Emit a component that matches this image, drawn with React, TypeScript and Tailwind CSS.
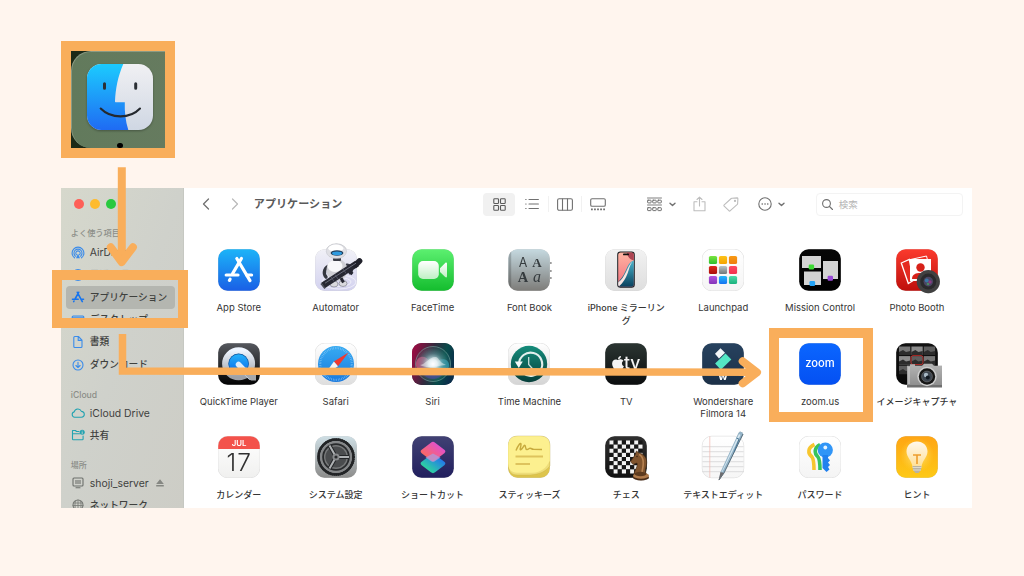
import type { ReactNode } from "react";
import clsx from "clsx";
import { FaApple } from "react-icons/fa";

/* ---------- helpers ---------- */

function Grad({ id, from, to, x2 = 0, y2 = 1 }: { id: string; from: string; to: string; x2?: number; y2?: number }) {
  return (
    <linearGradient id={id} x1="0" y1="0" x2={x2} y2={y2}>
      <stop offset="0" stopColor={from} />
      <stop offset="1" stopColor={to} />
    </linearGradient>
  );
}

function Tile({ id, from, to, children, edge }: { id: string; from: string; to: string; children?: ReactNode; edge?: boolean }) {
  return (
    <svg viewBox="0 0 42 42" className="h-[42px] w-[42px] shrink-0 overflow-visible drop-shadow-[0_0.5px_0.5px_rgba(0,0,0,0.25)]">
      <defs>
        <Grad id={id} from={from} to={to} />
      </defs>
      <rect x="0.2" y="0.2" width="41.6" height="41.6" rx="9.5" fill={`url(#${id})`} stroke={edge ? "#ececec" : "none"} strokeWidth="0.3" />
      {children}
    </svg>
  );
}

/* ---------- app icons ---------- */

const AppStore = () => (
  <Tile id="as" from="#1cb4f8" to="#1a5fe6">
    <g stroke="#fff" strokeWidth="3.2" strokeLinecap="round">
      <path d="M23.4 9.5 14.6 24.6M12.1 30.2 11.4 31.4" />
      <path d="M18.8 9.5 32 31.6" />
      <path d="M8.2 26H20M28.6 26H33.6" />
    </g>
  </Tile>
);

const Automator = () => (
  <Tile id="au" from="#f1f1f7" to="#d3d2ef">
    <g fill="none" stroke="#fff" strokeWidth="0.8" opacity="0.7">
      <ellipse cx="24" cy="33" rx="17" ry="7" />
      <ellipse cx="24" cy="33" rx="12" ry="4.5" />
    </g>
    <path d="M16 17C9 17 8 25 11 28" fill="none" stroke="#34363f" strokeWidth="3.4" strokeLinecap="round" />
    <path d="M32 16c5 1 6 5 3 8" fill="none" stroke="#3c3e49" strokeWidth="3" strokeLinecap="round" />
    <ellipse cx="19" cy="35" rx="4" ry="3" fill="#d9d9de" stroke="#70727d" strokeWidth="0.6" />
    <ellipse cx="28" cy="34.5" rx="4" ry="3" fill="#d9d9de" stroke="#70727d" strokeWidth="0.6" />
    <ellipse cx="22" cy="21" rx="10.5" ry="11" fill="#cfcfd5" />
    <ellipse cx="20" cy="17" rx="7.5" ry="6" fill="#f8f8fa" />
    <rect x="18" y="8.5" width="8" height="3.5" rx="1" fill="#3b3d46" />
    <ellipse cx="21.4" cy="2.2" rx="10.2" ry="7.4" fill="#dfdfe4" stroke="#b7b8c0" strokeWidth="0.4" />
    <ellipse cx="20.8" cy="-0.8" rx="7.5" ry="3.6" fill="#fff" />
    <ellipse cx="22" cy="4" rx="6.4" ry="2.8" fill="#24405c" />
    <ellipse cx="22" cy="4.3" rx="5" ry="1.9" fill="#2e9be0" />
    <path d="m8 36.5 34-22" stroke="#272833" strokeWidth="6.4" />
    <path d="m40.5 16 4-4" stroke="#20212b" strokeWidth="5.6" strokeLinecap="round" />
    <path d="m10 34.2 31-20" stroke="#6b6d7c" strokeWidth="1" />
    <path d="m26 29 2.5 4.5M34 22l3.5 3" stroke="#272833" strokeWidth="3" />
    <path d="M6 34.5 10 39.5" stroke="#4b4d58" strokeWidth="1.6" />
    <path d="m16 28 3 4.4M20 25.6l3 4.4M28 20l3 4.4" stroke="#555768" strokeWidth="0.9" />
  </Tile>
);

const FaceTime = () => (
  <Tile id="ft" from="#5cf070" to="#14bd2e">
    <defs>
      <Grad id="ftc" from="#ffffff" to="#bff0c4" />
    </defs>
    <rect x="6.2" y="12" width="20.6" height="18" rx="4.8" fill="url(#ftc)" />
    <path d="M28 19.2 33.2 14c.8-.8 1.8-.5 1.8.6v12.8c0 1.1-1 1.4-1.8.6L28 22.9Z" fill="url(#ftc)" />
  </Tile>
);

const FontBook = () => (
  <Tile id="fb" from="#c5d9e0" to="#7d7c79">
    <path d="M42 14h1.6M42 22h1.6M42 29h1.6" stroke="#8c8c8c" strokeWidth="1.6" />
    <path d="M3.2 2.5C1.5 4 .8 6 .8 9.5v23c0 3 .7 5 2.4 6.5Z" fill="#00000030" />
    <g fill="#353b3e" textAnchor="middle">
      <text x="15" y="17.5" fontSize="12.5" className="font-['Inter',sans-serif] font-normal">A</text>
      <text x="29" y="17.5" fontSize="13" className="font-['Liberation_Serif',serif] font-bold">A</text>
      <text x="15" y="32.5" fontSize="14.5" className="font-['Liberation_Serif',serif] font-bold">A</text>
      <text x="29" y="32.5" fontSize="16" className="font-['Liberation_Serif',serif] italic">a</text>
    </g>
  </Tile>
);

const Mirroring = () => (
  <Tile id="im" from="#f2f2f2" to="#dedede">
    <defs>
      <Grad id="imr" from="#ffb6a3" to="#f06c7c" />
      <Grad id="imb" from="#4ab7cf" to="#063c59" />
      <clipPath id="imc">
        <rect x="13.2" y="3.6" width="15.6" height="34.2" rx="2.5" />
      </clipPath>
    </defs>
    <rect x="12.2" y="2.6" width="17.6" height="36.2" rx="3.2" fill="#1c1e22" />
    <g clipPath="url(#imc)">
      <path d="M12 3h18v36H12Z" fill="url(#imr)" />
      <path d="M30 11C20 14 23 25 12 34v5h18Z" fill="url(#imb)" />
      <path d="M12 34c9-5 9-16 16-22-6 7-3 17-16 27Z" fill="#f8e5e2" />
      <path d="M22 3h8v8c-4 1-8-3-8-8Z" fill="#ad4553" />
    </g>
    <rect x="18" y="4.6" width="6" height="1.7" rx="0.85" fill="#111" />
  </Tile>
);

const launchColors = [
  ["#7be43f", "#2abf2d"], ["#fcc319", "#f5a200"], ["#f89a12", "#ed7d10"],
  ["#e12b1d", "#a80d0a"], ["#bac4c8", "#707779"], ["#ff4964", "#f2304d"],
  ["#b353df", "#8335b8"], ["#25b9fb", "#1672f0"], ["#4fd9a9", "#18b17c"],
];

const Launchpad = () => (
  <Tile id="lp" from="#ffffff" to="#f5f5f5" edge>
    {launchColors.map(([from, to], i) => (
      <g key={from}>
        <defs>
          <Grad id={`lp${i}`} from={from} to={to} />
        </defs>
        <rect x={6.9 + (i % 3) * 10} y={6.9 + Math.floor(i / 3) * 10} width="8.2" height="8.2" rx="1.7" fill={`url(#lp${i})`} />
      </g>
    ))}
  </Tile>
);

const MissionControl = () => (
  <Tile id="mc" from="#060606" to="#000000">
    <g fill="#d3d3d3">
      <rect x="3" y="7" width="19" height="12" />
      <rect x="24" y="12" width="15" height="18" />
      <rect x="5" y="22.5" width="17" height="13.5" />
    </g>
    <rect x="9.7" y="15.5" width="5.4" height="5" rx="1.2" fill="#3edb35" />
    <rect x="28.6" y="26.8" width="5.4" height="5" rx="1.2" fill="#9a4ad8" />
    <rect x="10.5" y="32" width="5.6" height="5" rx="1.2" fill="#23a3f7" />
  </Tile>
);

const PhotoBooth = () => (
  <Tile id="pb" from="#fb3a2d" to="#be0f0b">
    <path d="m5.3 14 8-3.5 4 21-5 3Z" fill="#e52a20" stroke="#fff" strokeWidth="1.3" />
    <path d="m14.5 10.5 16-3.5 1 4" fill="none" stroke="#fff" strokeWidth="1" />
    <path d="M14 10h21v22H14Z" fill="#fff" />
    <circle cx="24.5" cy="18.5" r="4.2" fill="#d72119" />
    <path d="M16 30c0-5 4-6 8.5-6s8.5 1 8.5 6Z" fill="#d72119" />
    <circle cx="32.3" cy="32.6" r="11.6" fill="#414141" />
    <circle cx="32.3" cy="32.6" r="8" fill="#2a2a2c" />
    <circle cx="32.3" cy="32.6" r="4.8" fill="#4b4664" />
    <circle cx="30.8" cy="31.5" r="2" fill="#3a78a6" />
    <circle cx="34" cy="33" r="1.7" fill="#8c3b84" />
    <circle cx="32" cy="35" r="1.3" fill="#4a8a62" />
  </Tile>
);

const QuickTime = () => (
  <Tile id="qt" from="#55585e" to="#020202">
    <defs>
      <Grad id="qtr" from="#eef5ff" to="#9da0a6" />
      <Grad id="qtb" from="#22b1fa" to="#0d68e8" />
    </defs>
    <circle cx="20.6" cy="20.8" r="13.3" fill="url(#qtb)" stroke="url(#qtr)" strokeWidth="6.4" />
    <circle cx="20.6" cy="20.8" r="10.2" fill="#14549b" />
    <circle cx="20.6" cy="20.8" r="9.6" fill="url(#qtb)" />
    <path d="m20.5 21.5 12 12.5" stroke="#dcebfb" strokeWidth="5.5" strokeLinecap="round" />
    <path d="M27 32h11v5.5h-5Z" fill="#a5a7ab" />
  </Tile>
);

const Safari = () => (
  <Tile id="sf" from="#ffffff" to="#dedede" edge>
    <defs>
      <Grad id="sfb" from="#37abf2" to="#1a7ade" />
    </defs>
    <circle cx="21" cy="21" r="18" fill="url(#sfb)" />
    <circle cx="21" cy="21" r="15.8" fill="none" stroke="#8fcbf7" strokeWidth="2.2" strokeDasharray="0.5 1.2" />
    <path d="M33.5 9.5 18.9 18.6 23 23.2Z" fill="#f0392f" />
    <path d="M8.5 33 18.9 18.6 23 23.2Z" fill="#f4f4f4" />
  </Tile>
);

const Siri = () => (
  <Tile id="si" from="#2b1732" to="#101c36">
    <defs>
      <linearGradient id="sib" x1="0" y1="0.2" x2="1" y2="0.5">
        <stop offset="0" stopColor="#9e0b43" />
        <stop offset="0.45" stopColor="#342a3e" />
        <stop offset="0.75" stopColor="#084b4a" />
        <stop offset="1" stopColor="#0b2f4b" />
      </linearGradient>
      <radialGradient id="sio">
        <stop offset="0" stopColor="#ffffff" />
        <stop offset="0.25" stopColor="#cfe3e8" />
        <stop offset="0.6" stopColor="#67a6a8" stopOpacity="0.55" />
        <stop offset="1" stopColor="#2d8a7b" stopOpacity="0.15" />
      </radialGradient>
    </defs>
    <rect width="42" height="42" rx="9.5" fill="url(#sib)" />
    <path d="M4 20c2-8 10-8 14-1l4 3-8 5c-6 2-11-2-10-7Z" fill="#e84079" opacity="0.85" />
    <path d="M22 22c5-8 14-7 15-1s-5 9-11 6Z" fill="#2c99b5" opacity="0.8" />
    <circle cx="21" cy="21" r="17.5" fill="url(#sio)" stroke="#79aaa3" strokeWidth="0.6" />
    <path d="M8 22c6-1 10-9 16-8 3 1 3 5 10 8-9 1-19 4-26 0Z" fill="#fff" opacity="0.45" />
    <path d="M9 27c7-6 18 6 26-3-3 8-8 12-14 12s-10-4-12-9Z" fill="#4c45a7" opacity="0.6" />
  </Tile>
);

const TimeMachine = () => (
  <Tile id="tm" from="#ffffff" to="#d4d4d4" edge>
    <defs>
      <Grad id="tmb" from="#158c7b" to="#073f3b" />
    </defs>
    <circle cx="21" cy="21" r="18.2" fill="url(#tmb)" />
    <path d="M11 21A11.6 11.6 0 1 1 15 30" fill="none" stroke="#e2efed" strokeWidth="2.1" />
    <path d="M6.8 18.5h8l-4 6.5Z" fill="#f3f9f8" />
    <path d="M20.7 14v7.5l4.5 5" fill="none" stroke="#c9e0dd" strokeWidth="1.3" />
  </Tile>
);

const AppleTV = () => (
  <Tile id="tv" from="#2b3532" to="#0b0d0e">
    <FaApple x="5" y="12" width="14" height="14.5" color="#f4f4f4" />
    <text x="19" y="26.3" fontSize="17.5" fill="#f4f4f4" className="font-['Inter',sans-serif] font-medium">tv</text>
  </Tile>
);

const Filmora = () => (
  <Tile id="fm" from="#27425f" to="#1c3047">
    <path d="m18.5 5.2 4.5 4.6-6 5.7-4-4.7Z" fill="#f3f6f8" />
    <path d="m23.5 10.5 5.8 6-10.5 10.3-5.7-6.3Z" fill="#54e7c4" />
    <text x="21" y="37.3" fontSize="11" textAnchor="middle" fill="#fff" className="font-['Inter',sans-serif] font-bold">w</text>
  </Tile>
);

const Zoom = () => (
  <Tile id="zm" from="#0b66ff" to="#0450f2">
    <text x="21" y="24.4" fontSize="11.4" textLength="29.5" lengthAdjust="spacingAndGlyphs" textAnchor="middle" fill="#fff" className="font-['Inter',sans-serif] font-medium">zoom</text>
  </Tile>
);

const ImageCapture = () => (
  <Tile id="ic" from="#121212" to="#070707">
    {[0, 1, 2].map((r) =>
      [0, 1, 2].map((c) => (
        <g key={`${r}${c}`}>
          <rect x={3 + c * 12.4} y={3.5 + r * 9.6} width="11.3" height="8.4" fill={["#777", "#8c8c8c", "#5e5e5e"][(r + c) % 3]} />
          <path d={`M${3 + c * 12.4} ${11.9 + r * 9.6}v-3l4-2 3 2 4.3-1v4Z`} fill="#2c2c2c" />
        </g>
      )),
    )}
    <rect x="15" y="12.6" width="12" height="9" rx="2" fill="none" stroke="#d92f2b" strokeWidth="0.8" />
    <defs>
      <Grad id="icc" from="#b5b5b5" to="#8b8b8b" />
    </defs>
    <path d="M11 22.8h3v-1.5h5v1.5h7l2-2h8l2 2h8v21.5H11Z" fill="url(#icc)" />
    <path d="M11 42h35v2.3H11Z" fill="#6f6f6f" />
    <path d="M13 24v17" stroke="#ccc" strokeWidth="1.2" />
    <circle cx="31" cy="33.5" r="9.7" fill="#cfcfcf" />
    <circle cx="31" cy="33.5" r="8.2" fill="#171717" />
    <circle cx="31" cy="33.5" r="5.4" fill="#3e4650" stroke="#777" strokeWidth="0.6" />
    <circle cx="30" cy="32" r="2.2" fill="#a9b9c5" />
    <circle cx="31.8" cy="34.5" r="2" fill="#111820" />
  </Tile>
);

const Calendar = () => (
  <Tile id="cl" from="#ffffff" to="#f0f0ef" edge>
    <path d="M0.2 13V9.7a9.5 9.5 0 0 1 9.5-9.5h22.6a9.5 9.5 0 0 1 9.5 9.5V13Z" fill="#f3524b" />
    <text x="21" y="9.7" fontSize="7.8" textAnchor="middle" fill="#fff" className="font-['Inter',sans-serif] font-semibold">JUL</text>
    <text x="20.7" y="35" fontSize="24.5" textLength="24.5" textAnchor="middle" fill="#303030" className="font-['Inter',sans-serif] font-light">17</text>
  </Tile>
);

const Settings = () => (
  <Tile id="st" from="#cfdfe5" to="#8c8c8b">
    <circle cx="21" cy="21" r="17.3" fill="none" stroke="#26282a" strokeWidth="3" />
    <circle cx="21" cy="21" r="17.8" fill="none" stroke="#202224" strokeWidth="2" strokeDasharray="1.1 0.8" />
    <circle cx="21" cy="21" r="16" fill="#858789" />
    <circle cx="21" cy="21" r="13.8" fill="#292b2d" />
    <circle cx="21" cy="21" r="12" fill="#77797a" />
    <circle cx="21" cy="21" r="10.6" fill="#4a4c4e" />
    <path d="M21 21h13M21 21l-6.5-11.500M21 21l-6.5 11.500" stroke="#242628" strokeWidth="4" />
    <path d="M21 21h13M21 21l-6.5-11.500M21 21l-6.5 11.500" stroke="#aeb1b3" strokeWidth="2" />
    <circle cx="21" cy="21" r="3.5" fill="#898b8d" />
    <circle cx="21" cy="21" r="1.6" fill="#292b2d" />
  </Tile>
);

const Shortcuts = () => (
  <Tile id="sc" from="#414173" to="#211f5e">
    <defs>
      <Grad id="scb" from="#237be9" to="#2ed1a1" />
      <Grad id="scr" from="#e252c8" to="#fb6864" />
    </defs>
    <g transform="translate(21 27.5) scale(1 0.78) rotate(45)">
      <rect x="-9.5" y="-9.5" width="19" height="19" rx="3" fill="url(#scb)" />
    </g>
    <g transform="translate(21 15.5) scale(1 0.78) rotate(45)">
      <rect x="-9.5" y="-9.5" width="19" height="19" rx="3" fill="url(#scr)" />
    </g>
    <path d="m21 17.5 7.5 4-6 4c-1 .6-2 .6-3 0l-6-4Z" fill="#ae9ae0" opacity="0.75" />
  </Tile>
);

const Stickies = () => (
  <Tile id="sk" from="#e9d366" to="#dcc34b">
    <path d="M0.8 8c0-5 3-7.8 9-7.8h22.500c6 0 9.500 3 9.500 9V30c-5 7-14 9-22 9H9c-5 0-8.200-3-8.200-8Z" fill="#eedd79" stroke="#c9b143" strokeWidth="0.4" />
    <path d="M0.2 9.700C.2 3.500 4 .2 9.700.2h22.600c6 0 9.500 3.500 9.500 9.500v15c-4 8-9 11.500-17 12H9c-5.500 0-8.800-3.500-8.800-9Z" fill="#fcf08f" />
    <path d="M8 14.500c2-5 5-9 5-6s-2 6 0 5 3-5 4-4 0 4 2 4 2-2 4-1 2 1 11 1" fill="none" stroke="#c8aa3d" strokeWidth="1.4" />
    <path d="M7.500 20.500H35M7.500 28H22" stroke="#dec35d" strokeWidth="2" />
  </Tile>
);

const Chess = () => (
  <Tile id="ch" from="#303030" to="#101010">
    {Array.from({ length: 64 }, (_, i) => {
      const c = i % 8;
      const r = Math.floor(i / 8);
      return <rect key={i} x={4.5 + c * 4.125} y={4.5 + r * 4.125} width="4.125" height="4.125" fill={(r + c) % 2 ? "#171717" : "#f2f2f2"} />;
    })}
    <path d="M29 38c1-5 4-7 3-11l-4 1.500-2.500-3L30 19l1.500-4 2.500 2c6 1 8.500 6 7.500 12-1 4-1.500 6-.5 9Z" fill="#80542e" stroke="#3e2613" strokeWidth="0.6" />
    <path d="M34 18.500c5 2 5 9 3 17.500" stroke="#b88453" strokeWidth="1.6" fill="none" />
    <circle cx="32" cy="20.500" r="0.7" fill="#2c1a0d" />
    <ellipse cx="36" cy="41.500" rx="8" ry="3" fill="#4a2c17" />
    <ellipse cx="36" cy="39.700" rx="8" ry="3" fill="#b07a4a" />
    <ellipse cx="35.500" cy="38" rx="6" ry="2.200" fill="#5d3a1e" />
  </Tile>
);

const TextEdit = () => (
  <Tile id="te" from="#ffffff" to="#f6f6f6" edge>
    <path d="M0.500 10.700h41M0.500 15.700h41M0.500 20.700h41M0.500 25.700h41M0.500 30.700h41M0.500 35.700h41" stroke="#cfcfd1" strokeWidth="0.7" />
    <path d="M7.800 0.500v41" stroke="#f0b7b0" strokeWidth="0.7" />
    <path d="m36.500-3 1.500-1.500 2.500 1L41-1.500 22 37l-5 7 1.500-8Z" fill="#94b4c8" />
    <path d="m37-2 1.500 1L20 36.500l-1.500 2Z" fill="#d7e8f1" />
    <path d="M41-2 22 37l-5 7" fill="none" stroke="#4d6270" strokeWidth="0.9" />
    <path d="m18.500 36 3.500 1-5.500 7.500Z" fill="#6d6d70" />
    <path d="m34.500 2 2.500 1.200-5 13" fill="none" stroke="#4d7895" strokeWidth="1" />
  </Tile>
);

const Passwords = () => (
  <Tile id="pw" from="#ffffff" to="#f4f4f4" edge>
    <g fill="none" strokeWidth="3.6" strokeLinejoin="round">
      <path d="M15.500 8.500c-7 3-7 9-2.500 12.500 1.500 2 2 6 2 13" stroke="#f7c62e" />
      <path d="M21 8.500c-6 3-6 9-2 12.500 1.500 2 2 6 2 13" stroke="#37c35d" />
    </g>
    <circle cx="26.300" cy="14" r="7.600" fill="#3095f7" />
    <path d="M23.500 19h5.500v3l2 2.500-2 2 2 2.500-2 2 1.500 2.500-3 2.500-4-4Z" fill="#2181ee" />
    <circle cx="26.300" cy="11.500" r="1.900" fill="#e7f4ff" />
  </Tile>
);

const Tips = () => (
  <Tile id="tp" from="#ffa514" to="#fdc916">
    <defs>
      <radialGradient id="tpg">
        <stop offset="0" stopColor="#ffe999" />
        <stop offset="1" stopColor="#ffd648" stopOpacity="0" />
      </radialGradient>
      <Grad id="tpb" from="#fff8ed" to="#ffe096" />
    </defs>
    <circle cx="21" cy="19" r="17" fill="url(#tpg)" />
    <path d="M21 5.500c-6 0-10.500 4.200-10.500 10 0 6 5.500 9 6 15.500h9c.5-6.500 6-9.500 6-15.500 0-5.800-4.500-10-10.500-10Z" fill="url(#tpb)" />
    <path d="M17 19h8M21 19v9" stroke="#ee9d2d" strokeWidth="1.6" />
    <path d="M16.500 30h9l-.5 4-2.500 3h-3L17 34Z" fill="#b8b3a3" />
    <path d="M16.500 31.500h9M17 34h8" stroke="#e8e5d8" strokeWidth="0.8" />
  </Tile>
);

const apps: { label: string; icon: ReactNode; jp?: boolean; second?: string }[] = [
  { label: "App Store", icon: <AppStore /> },
  { label: "Automator", icon: <Automator /> },
  { label: "FaceTime", icon: <FaceTime /> },
  { label: "Font Book", icon: <FontBook /> },
  { label: "iPhone ミラーリン", second: "グ", icon: <Mirroring />, jp: true },
  { label: "Launchpad", icon: <Launchpad /> },
  { label: "Mission Control", icon: <MissionControl /> },
  { label: "Photo Booth", icon: <PhotoBooth /> },
  { label: "QuickTime Player", icon: <QuickTime /> },
  { label: "Safari", icon: <Safari /> },
  { label: "Siri", icon: <Siri /> },
  { label: "Time Machine", icon: <TimeMachine /> },
  { label: "TV", icon: <AppleTV /> },
  { label: "Wondershare", second: "Filmora 14", icon: <Filmora /> },
  { label: "zoom.us", icon: <Zoom /> },
  { label: "イメージキャプチャ", icon: <ImageCapture />, jp: true },
  { label: "カレンダー", icon: <Calendar />, jp: true },
  { label: "システム設定", icon: <Settings />, jp: true },
  { label: "ショートカット", icon: <Shortcuts />, jp: true },
  { label: "スティッキーズ", icon: <Stickies />, jp: true },
  { label: "チェス", icon: <Chess />, jp: true },
  { label: "テキストエディット", icon: <TextEdit />, jp: true },
  { label: "パスワード", icon: <Passwords />, jp: true },
  { label: "ヒント", icon: <Tips />, jp: true },
];

/* ---------- sidebar ---------- */

function SideIcon({ children, color = "#3b8cea" }: { children: ReactNode; color?: string }) {
  return (
    <svg viewBox="0 0 14 14" className="h-[14px] w-[14px] shrink-0" fill="none" stroke={color} strokeWidth="1.1" strokeLinecap="round" strokeLinejoin="round">
      {children}
    </svg>
  );
}

function SideItem({ icon, label, active, jp, eject, faded }: { icon: ReactNode; label: string; active?: boolean; jp?: boolean; eject?: boolean; faded?: boolean }) {
  return (
    <div className={clsx("ml-[5px] flex h-[22.4px] w-[108.5px] shrink-0 items-center gap-[4.5px] rounded-[4px] pl-[5px]", active && "bg-[#b4b6b0]")}>
      {icon}
      <span
        className={clsx(
          "whitespace-nowrap pt-px",
          faded ? "text-[#c6c9c2]" : "text-[#3f413e]",
          jp ? "text-[9.7px] font-medium" : "text-[10.4px]",
        )}
      >
        {label}
      </span>
      {eject && (
        <svg viewBox="0 0 8 8" className="ml-[3px] h-2 w-2" fill="#858782">
          <path d="M4 .3 7.8 5H.2ZM.2 6h7.6v1.5H.2Z" />
        </svg>
      )}
    </div>
  );
}

function SideHeader({ children, className }: { children: ReactNode; className?: string }) {
  return <div className={clsx("shrink-0 pl-[9.5px] font-medium leading-[14px] text-[#8b8d87]", className)}>{children}</div>;
}

function Sidebar() {
  return (
    <aside className="flex h-full w-[122.5px] shrink-0 flex-col overflow-hidden border-r border-[#c6c8c2] bg-linear-to-br from-[#d6d8cc] via-[#cfd1cb] to-[#cdcdc6]">
      <div className="flex gap-[6px] pl-[12.5px] pt-[11px]">
        <span className="h-[10px] w-[10px] rounded-full bg-[#fe5f57]" />
        <span className="h-[10px] w-[10px] rounded-full bg-[#febb2e]" />
        <span className="h-[10px] w-[10px] rounded-full bg-[#29c93f]" />
      </div>
      <SideHeader className="mt-[17px] text-[8.2px]">よく使う項目</SideHeader>
      <div className="mt-[1.2px] flex flex-col">
        <SideItem
          label="AirDrop"
          icon={
            <SideIcon>
              <path d="M3.5 11.8A5.9 5.9 0 1 1 10.5 11.8M4.500 10.200A4 4 0 1 1 9.500 10.200M5.500 8.700A2.200 2.200 0 1 1 8.500 8.700" />
              <path d="M7 7.500 9 12.300H5Z" fill="#3b8cea" stroke="none" />
            </SideIcon>
          }
        />
        <SideItem
          jp
          faded
          label="最近の項目"
          icon={
            <SideIcon>
              <circle cx="7" cy="7" r="5.5" />
              <path d="M7 3.8V7L4.800 8" />
            </SideIcon>
          }
        />
        <SideItem
          jp
          active
          label="アプリケーション"
          icon={
            <SideIcon color="#1674ee">
              <path d="M7.700 2.300 4.300 8.500M3 11 2.700 11.600M6.300 2.300 11.300 11.600M1.500 9.200H7.200M10.200 9.200H12.500" strokeWidth="1.6" />
            </SideIcon>
          }
        />
        <SideItem
          jp
          label="デスクトップ"
          icon={
            <SideIcon>
              <rect x="1.2" y="3" width="11.6" height="8" rx="1" />
              <path d="M1.500 4.200h11M4 9.500h6" />
            </SideIcon>
          }
        />
        <SideItem
          jp
          label="書類"
          icon={
            <SideIcon>
              <path d="M3.800 1.500h3.600L11 5.200v6.300c0 .6-.4 1-1 1H3.800c-.6 0-1-.4-1-1v-9c0-.6.4-1 1-1ZM7.200 1.700v3.700h3.700" />
            </SideIcon>
          }
        />
        <SideItem
          jp
          label="ダウンロード"
          icon={
            <SideIcon>
              <circle cx="7" cy="7" r="5" />
              <path d="M7 4.300v5M4.900 7.500 7 9.500l2.100-2" />
            </SideIcon>
          }
        />
      </div>
      <SideHeader className="mt-[12px] text-[8.6px]">iCloud</SideHeader>
      <div className="flex flex-col">
        <SideItem
          label="iCloud Drive"
          icon={
            <SideIcon color="#22a3b1">
              <path d="M3.700 11.200a2.700 2.700 0 0 1-.5-5.300 3.800 3.800 0 0 1 7.200-.5 2.900 2.900 0 0 1 0 5.800Z" />
            </SideIcon>
          }
        />
        <SideItem
          jp
          label="共有"
          icon={
            <SideIcon color="#22a3b1">
              <path d="M8 3.500H5.500L4.500 2.500h-3v8.500c0 .5.3.8.8.8h9c.5 0 .8-.3.8-.8V8M1.500 5.800h7" />
              <circle cx="11.2" cy="4.3" r="2.5" fill="#22a3b1" stroke="none" />
              <path d="M11.200 3v.2M11.200 4.400v1.200" stroke="#d0d2cb" strokeWidth="0.8" />
            </SideIcon>
          }
        />
      </div>
      <SideHeader className="mt-[11.2px] text-[8px]">場所</SideHeader>
      <div className="flex flex-col">
        <SideItem
          eject
          label="shoji_server"
          icon={
            <SideIcon color="#6d706c">
              <rect x="2" y="2" width="10" height="8" rx="1" />
              <rect x="4" y="4" width="6" height="4" fill="#9a9c97" stroke="none" />
              <path d="M5 11.800h4" />
            </SideIcon>
          }
        />
        <SideItem
          jp
          label="ネットワーク"
          icon={
            <SideIcon color="#777a75">
              <circle cx="7" cy="7" r="5" />
              <path d="M2.500 5h9M2 7.500h10M7 2v10M5 2.500C3.500 5 3.500 9 5 11.500M9 2.500c1.500 2.500 1.500 6.500 0 9" strokeWidth="0.8" />
            </SideIcon>
          }
        />
      </div>
    </aside>
  );
}

/* ---------- toolbar ---------- */

function Glyph({ w, h, color = "#707070", className, sw = 1.1, children }: { w: number; h: number; color?: string; className?: string; sw?: number; children: ReactNode }) {
  return (
    <svg width={w} height={h} viewBox={`0 0 ${w} ${h}`} className={clsx("shrink-0", className)} fill="none" stroke={color} strokeWidth={sw} strokeLinecap="round" strokeLinejoin="round">
      {children}
    </svg>
  );
}

function Toolbar() {
  return (
    <div className="flex h-[32px] shrink-0 items-center">
      <Glyph w={8} h={12} className="ml-[18px]" sw={1.3}>
        <path d="M6.500 1 1.500 6l5 5" />
      </Glyph>
      <Glyph w={8} h={12} color="#b9b9b9" className="ml-[21px]" sw={1.2}>
        <path d="m1.500 1 5 5-5 5" />
      </Glyph>
      <span className="ml-[15px] w-[229.5px] shrink-0 whitespace-nowrap pt-px text-[11.1px] font-bold text-[#5a5a5a]">アプリケーション</span>
      <span className="flex h-[22.5px] w-[32px] shrink-0 items-center justify-center rounded-[4px] bg-[#f1f1f1]">
        <Glyph w={13} h={13} color="#5a5a5a">
          <rect x="0.8" y="0.8" width="4.7" height="4.7" rx="0.8" />
          <rect x="7.5" y="0.8" width="4.7" height="4.7" rx="0.8" />
          <rect x="0.8" y="7.5" width="4.7" height="4.7" rx="0.8" />
          <rect x="7.5" y="7.5" width="4.7" height="4.7" rx="0.8" />
        </Glyph>
      </span>
      <Glyph w={14} h={12} className="ml-[10px]">
        <path d="M4 1.500h9.400M4 6h9.400M4 10.500h9.400M.7 1.500h.4M.7 6h.4M.7 10.500h.4" />
      </Glyph>
      <span className="ml-[9px] h-[16px] w-px bg-[#f1f1f1]" />
      <Glyph w={16} h={13} className="ml-[8px]">
        <rect x="0.6" y="0.7" width="14.8" height="11.6" rx="1.5" />
        <path d="M5.500 1v11M10.500 1v11" />
      </Glyph>
      <span className="ml-[8px] h-[16px] w-px bg-[#f1f1f1]" />
      <Glyph w={16} h={13} className="ml-[8px]">
        <rect x="0.7" y="0.7" width="14.6" height="7.6" rx="1.3" />
        <path d="M1 11.300h14" strokeWidth="1.8" strokeDasharray="1.8 1.25" strokeLinecap="butt" />
      </Glyph>
      <Glyph w={15} h={15} className="ml-[41px]" sw={1}>
        <path d="M.5 1h14M.5 8h14" strokeWidth="0.9" />
        {[0.6, 5.7, 10.8].map((x) => (
          <g key={x}>
            <rect x={x} y="3.2" width="3.5" height="2.7" rx="0.5" />
            <rect x={x} y="10.7" width="3.5" height="2.9" rx="0.5" />
          </g>
        ))}
      </Glyph>
      <Glyph w={7} h={5} className="ml-[6.5px]" sw={1.4}>
        <path d="m1 1.200 2.500 2.300L6 1.200" />
      </Glyph>
      <Glyph w={13} h={16} color="#bdbdbd" className="ml-[17.5px]">
        <path d="M4 5.800H1v9h11v-9H9M6.500 10V1.200M4 3.500l2.500-2.400L9 3.500" />
      </Glyph>
      <Glyph w={16} h={15} color="#bdbdbd" className="ml-[17px]">
        <path d="M9 1.200 14 .9c.5 0 .9.3.9.8l-.3 5c0 .3-.1.5-.3.7l-7 6.300c-.5.5-1 .5-1.400 0L1.200 9.200c-.4-.5-.4-1 0-1.400l7-6.300Z" />
        <circle cx="12" cy="3.9" r="0.6" />
      </Glyph>
      <Glyph w={14} h={14} className="ml-[18.5px]">
        <circle cx="7" cy="7" r="6.2" />
        <path d="M4.200 7h.1M7 7h.1M9.700 7h.1" strokeWidth="1.6" />
      </Glyph>
      <Glyph w={7} h={5} className="ml-[6px]" sw={1.4}>
        <path d="m1 1.200 2.500 2.300L6 1.200" />
      </Glyph>
      <span className="ml-[31.500px] flex h-[22.5px] w-[147px] shrink-0 items-center rounded-[4px] border border-[#f3f3f3] pl-[4.5px]">
        <Glyph w={11} h={11}>
          <circle cx="4.5" cy="4.5" r="3.9" />
          <path d="m7.500 7.500 3 3" />
        </Glyph>
        <span className="ml-[6px] pt-px text-[9.5px] text-[#b4b4b4]">検索</span>
      </span>
    </div>
  );
}

function AppGrid() {
  return (
    <div className="ml-[6.6px] mt-[29px] grid w-[775px] grid-cols-8">
      {apps.map((a) => (
        <div key={a.label} className="flex h-[93.3px] flex-col items-center">
          {a.icon}
          <div
            className={clsx(
              "mt-[11px] whitespace-nowrap text-center leading-[12.7px] text-[#353535]",
              a.jp ? "text-[9px] font-medium" : "text-[9.5px]",
            )}
          >
            {a.label}
            {a.second && <div>{a.second}</div>}
          </div>
        </div>
      ))}
    </div>
  );
}

/* ---------- dock close-up ---------- */

function FinderDock() {
  return (
    <div className="absolute left-[61px] top-[41px] h-[117px] w-[113.5px] overflow-hidden border-[10px] border-[#f9ae5b] bg-[#1c2a17]">
      <div className="relative h-full w-[130px] rounded-l-[20px] border-l border-t border-[#8b9b84] bg-linear-to-r from-[#627a5c] to-[#677b60]">
        <svg viewBox="0 0 66 66" className="absolute left-[14.500px] top-[11.500px] h-[66px] w-[66px] drop-shadow-[0_1px_1px_rgba(0,0,0,0.3)]">
          <defs>
            <Grad id="fdw" from="#f0f0f3" to="#cfd7e3" />
            <Grad id="fdb" from="#1ccbfe" to="#1f6bf3" />
            <clipPath id="fdc">
              <rect width="66" height="66" rx="14.5" />
            </clipPath>
          </defs>
          <g clipPath="url(#fdc)">
            <path d="M0 0h66v66H0Z" fill="url(#fdw)" />
            <path d="M0 0h36.300C31 12 28.500 25 28 37.300c0 .7.3 1 1 1h8.800C37.500 48 38.500 57 41.300 66H0Z" fill="url(#fdb)" />
          </g>
          <path d="M17.500 19.700v4.600M48.700 19.700v4.600" stroke="#2b3035" strokeWidth="3" strokeLinecap="round" />
          <path d="M13.700 44.500C24 55 43 55 53 44.500" fill="none" stroke="#25292e" strokeWidth="2.1" strokeLinecap="round" />
        </svg>
        <span className="absolute left-[45px] top-[90.5px] h-[5.5px] w-[5.5px] rounded-full bg-black" />
      </div>
    </div>
  );
}

export default function App() {
  return (
    <div className="relative h-[576px] w-[1024px] overflow-hidden bg-[#fff5ee] pl-[61.3px] pt-[188.3px] font-['Inter','Noto_Sans_CJK_JP',sans-serif]">
      <div className="flex h-[319.3px] w-[910.5px] overflow-hidden bg-white">
        <Sidebar />
        <main className="min-w-0 flex-1">
          <Toolbar />
          <AppGrid />
        </main>
      </div>

      <FinderDock />
      <div className="absolute left-[52px] top-[270px] h-[57.5px] w-[135.5px] border-[10px] border-[#f9ae5b]" />
      <div className="absolute left-[769px] top-[328px] h-[93.5px] w-[104px] border-[10px] border-[#f9ae5b]" />
      <svg viewBox="0 0 1024 576" className="pointer-events-none absolute inset-0 h-[576px] w-[1024px]" fill="none" stroke="#f9ae5b" strokeWidth="8">
        <path d="M121.800 167.300V260" />
        <path d="m110.800 247.300 10.900 14.700 11.200-14.700" strokeLinecap="round" strokeLinejoin="round" />
        <path d="M122.500 334v37.100L756 372.200" strokeWidth="7.5" />
        <path d="M742.700 361.300 757 372.300l-14.300 11" strokeLinecap="round" strokeLinejoin="round" />
      </svg>
    </div>
  );
}
